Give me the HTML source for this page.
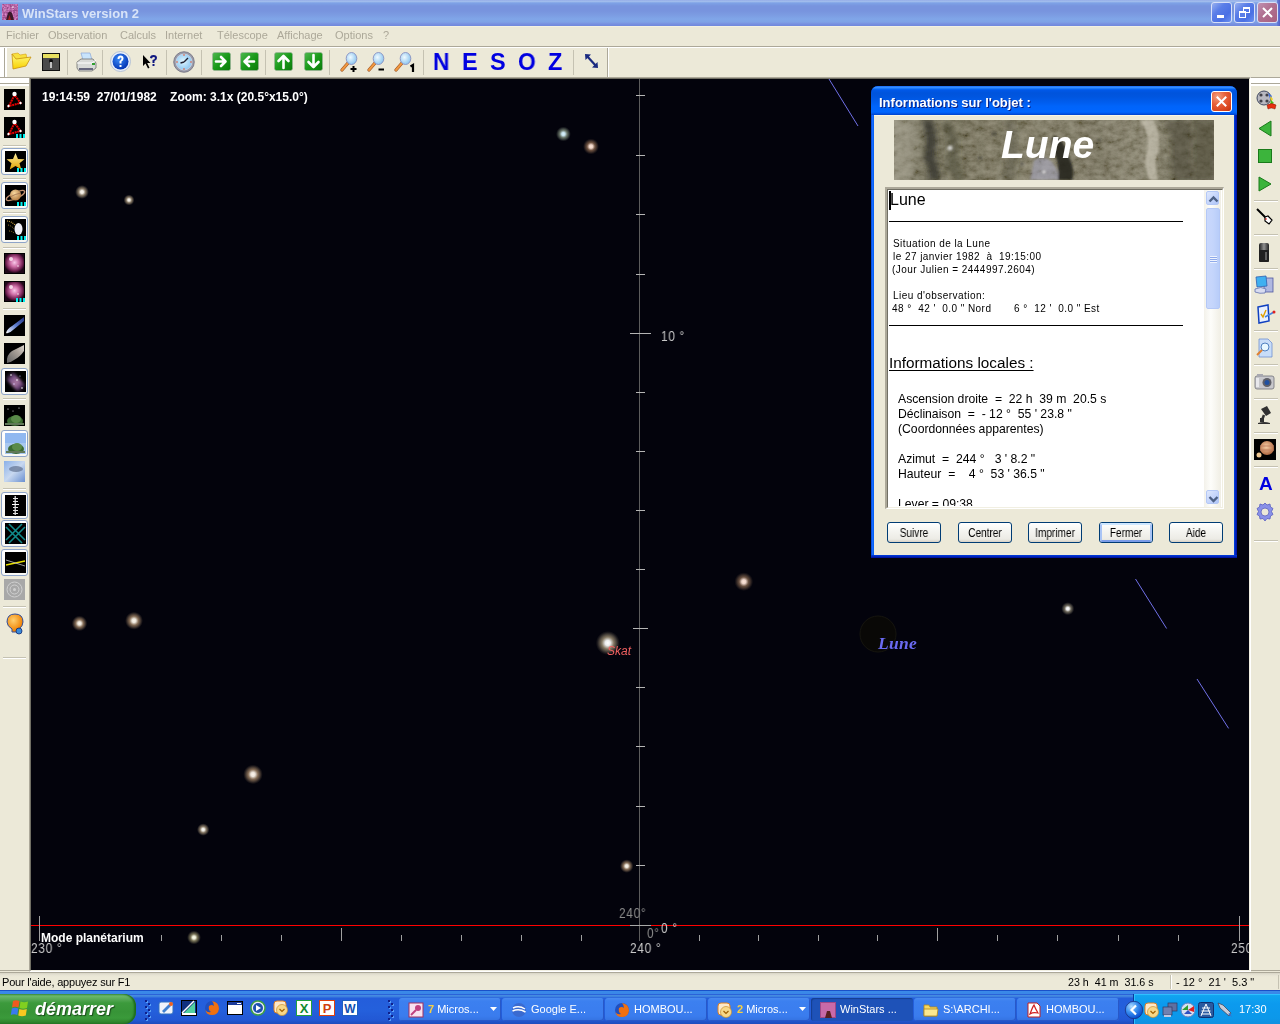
<!DOCTYPE html>
<html><head><meta charset="utf-8">
<style>
*{box-sizing:border-box;margin:0;padding:0}
html,body{width:1280px;height:1024px;overflow:hidden;background:#ece9d8;font-family:"Liberation Sans",sans-serif}
.a{position:absolute}
.t{line-height:1;white-space:pre;will-change:transform}
#sky{left:31px;top:79px;width:1218px;height:891px;background:#03030c;overflow:hidden}

</style></head><body>
<div class="a" style="left:0;top:0;width:1280px;height:26px;background:linear-gradient(#97aee8 0px,#a0bcec 1.5px,#7ea2e6 3px,#7894de 6px,#7894de 11px,#7c9ce2 15px,#80a6e8 19px,#7fa2e6 22px,#7890e0 24px,#7088dc 26px)"></div>
<div class="a" style="left:1277px;top:0;width:3px;height:26px;background:linear-gradient(90deg,#6a82d8,#5060c8)"></div>
<svg class="a" style="left:2px;top:4px;" width="16" height="16" viewBox="0 0 16 16"><defs><filter id="ai" x="0" y="0" width="100%" height="100%"><feTurbulence type="fractalNoise" baseFrequency="0.6" numOctaves="2" seed="3"/><feColorMatrix type="matrix" values="0 0 0 0 0.9  0 0 0 0 0.35  0 0 0 0 0.75  1.6 0 0 0 -0.5"/></filter></defs><rect width="16" height="16" fill="#9a4a8a"/><rect width="16" height="16" filter="url(#ai)"/><path d="M4 16 L6 9 Q8 6 10 9 L12 16Z" fill="#3a1a2a"/><path d="M6 16 L7.5 11 L9 16Z" fill="#a02020"/><circle cx="11" cy="3" r="0.8" fill="#fff"/><circle cx="3" cy="6" r="0.6" fill="#fff"/></svg>
<div class="a t" style="left:22px;top:7.00px;font-size:13px;font-weight:bold;color:#d8e4f8">WinStars version 2</div>
<div class="a" style="left:1211px;top:2px;width:21px;height:21px;border:1px solid #d8e0f8;border-radius:3px;background:linear-gradient(135deg,#98b0f0 0%,#5a7ee8 35%,#4a70e4 70%,#6a90f0 100%)"><svg class="a" style="left:0;top:0" width="19" height="19"><rect x="5" y="12" width="7" height="3" fill="#fff"/></svg></div>
<div class="a" style="left:1234px;top:2px;width:21px;height:21px;border:1px solid #d8e0f8;border-radius:3px;background:linear-gradient(135deg,#98b0f0 0%,#5a7ee8 35%,#4a70e4 70%,#6a90f0 100%)"><svg class="a" style="left:0;top:0" width="19" height="19"><rect x="8.5" y="4.5" width="6" height="5" fill="none" stroke="#fff" stroke-width="1"/><rect x="8" y="4" width="7" height="2" fill="#fff"/><rect x="4.5" y="8.5" width="6" height="6" fill="#5a7ee8" stroke="#fff" stroke-width="1"/><rect x="4" y="8" width="7" height="2" fill="#fff"/></svg></div>
<div class="a" style="left:1257px;top:2px;width:21px;height:21px;border:1px solid #d8e0f8;border-radius:3px;background:linear-gradient(135deg,#c090b0 0%,#b07090 45%,#a86080 100%)"><svg class="a" style="left:0;top:0" width="19" height="19"><path d="M5 5 L14 14 M14 5 L5 14" stroke="#fff" stroke-width="2"/></svg></div>
<div class="a" style="left:0;top:26px;width:1280px;height:1px;background:#f3f1e2"></div>
<div class="a t" style="left:6px;top:29.69px;font-size:11px;color:#aca899">Fichier</div>
<div class="a t" style="left:48px;top:29.69px;font-size:11px;color:#aca899">Observation</div>
<div class="a t" style="left:120px;top:29.69px;font-size:11px;color:#aca899">Calculs</div>
<div class="a t" style="left:165px;top:29.69px;font-size:11px;color:#aca899">Internet</div>
<div class="a t" style="left:217px;top:29.69px;font-size:11px;color:#aca899">Télescope</div>
<div class="a t" style="left:277px;top:29.69px;font-size:11px;color:#aca899">Affichage</div>
<div class="a t" style="left:335px;top:29.69px;font-size:11px;color:#aca899">Options</div>
<div class="a t" style="left:383px;top:29.69px;font-size:11px;color:#aca899">?</div>
<div class="a" style="left:0;top:46px;width:1280px;height:1px;background:#aca899"></div>
<div class="a" style="left:0;top:47px;width:1280px;height:1px;background:#fff"></div>
<div class="a" style="left:0;top:48px;width:4px;height:29px;background:#fff"></div>
<div class="a" style="left:4px;top:48px;width:1px;height:29px;background:#aca899"></div>
<div class="a" style="left:5px;top:48px;width:2px;height:29px;background:#fff"></div>
<div class="a" style="left:0;top:77px;width:1280px;height:1px;background:#aca899"></div>
<div class="a" style="left:607px;top:48px;width:1px;height:29px;background:#aca899"></div>
<div class="a" style="left:608px;top:48px;width:1px;height:29px;background:#fff"></div>
<div class="a" style="left:67px;top:50px;width:1px;height:25px;background:#c5c2b2"></div>
<div class="a" style="left:102px;top:50px;width:1px;height:25px;background:#c5c2b2"></div>
<div class="a" style="left:166px;top:50px;width:1px;height:25px;background:#c5c2b2"></div>
<div class="a" style="left:201px;top:50px;width:1px;height:25px;background:#c5c2b2"></div>
<div class="a" style="left:265px;top:50px;width:1px;height:25px;background:#c5c2b2"></div>
<div class="a" style="left:329px;top:50px;width:1px;height:25px;background:#c5c2b2"></div>
<div class="a" style="left:423px;top:50px;width:1px;height:25px;background:#c5c2b2"></div>
<div class="a" style="left:573px;top:50px;width:1px;height:25px;background:#c5c2b2"></div>
<svg class="a" style="left:11px;top:52px;" width="21" height="18" viewBox="0 0 21 18"><defs><linearGradient id="fo" x1="0" y1="0" x2="0" y2="1"><stop offset="0" stop-color="#fffc80"/><stop offset="1" stop-color="#f8d000"/></linearGradient></defs><path d="M1 2 L7 1 L9 3 L15 2 L16 6 L4 8 Z" fill="#f8e040" stroke="#d8a010" stroke-width="0.6"/><path d="M1 2 L2 17 L15 14 L20 5 L5 7 Z" fill="url(#fo)" stroke="#c89010" stroke-width="0.8"/></svg>
<svg class="a" style="left:42px;top:53px;" width="18" height="18" viewBox="0 0 18 18"><rect x="0" y="0" width="18" height="18" fill="#101010"/><rect x="1" y="1" width="16" height="16" fill="#4a4a4a"/><rect x="1" y="1" width="16" height="4" fill="#e8e060"/><circle cx="9" cy="8" r="2" fill="#0a0a0a"/><rect x="8" y="9" width="2" height="6" fill="#c0c0c0"/></svg>
<svg class="a" style="left:76px;top:52px;" width="21" height="20" viewBox="0 0 21 20"><path d="M5 1 L14 1 L16 8 L7 8 Z" fill="#c8e4fc" stroke="#8aa8d8" stroke-width="0.7"/><path d="M1 10 L5 7 L17 7 L20 11 L20 16 L16 19 L3 19 L1 16 Z" fill="#d8dad8" stroke="#707070" stroke-width="0.8"/><path d="M1 11 L16 11 L20 8" fill="none" stroke="#fff" stroke-width="1"/><rect x="16" y="11" width="3" height="2" fill="#30a030"/><path d="M3 17 L17 17" stroke="#404060" stroke-width="1.5"/></svg>
<svg class="a" style="left:110px;top:51px;" width="21" height="21" viewBox="0 0 21 21"><defs><radialGradient id="hb" cx="0.4" cy="0.35" r="0.7"><stop offset="0" stop-color="#3a8af8"/><stop offset="1" stop-color="#0030b0"/></radialGradient></defs><circle cx="10.5" cy="10.5" r="10" fill="#e8eef8" stroke="#a8b8d0" stroke-width="0.8"/><circle cx="10.5" cy="10.5" r="8" fill="url(#hb)"/><path d="M7.5 8 Q7.5 4.5 10.5 4.5 Q13.5 4.5 13.5 7.5 Q13.5 9.5 11.5 10.5 L11.5 12.5 L9.5 12.5 L9.5 10 Q11.5 9 11.5 7.5 Q11.5 6.5 10.5 6.5 Q9.5 6.5 9.5 8 Z" fill="#fff"/><rect x="9.5" y="14" width="2" height="2" fill="#fff"/></svg>
<svg class="a" style="left:142px;top:54px;" width="17" height="16" viewBox="0 0 17 16"><path d="M1 1 L1 12 L3.5 9.5 L6 14.5 L7.5 13.8 L5.2 9 L8.5 9 Z" fill="#000"/><path d="M8 4 Q8 1 11.5 1 Q15 1 15 4 Q15 6 12.5 7 L12.5 9 L10.5 9 L10.5 6 Q13 5.5 13 4 Q13 3 11.5 3 Q10 3 10 4.5 Z" fill="#101880"/><rect x="10.5" y="10" width="2" height="2" fill="#101880"/></svg>
<svg class="a" style="left:173px;top:51px;" width="22" height="22" viewBox="0 0 22 22"><defs><radialGradient id="cf" cx="0.45" cy="0.45" r="0.6"><stop offset="0" stop-color="#e0f6ff"/><stop offset="1" stop-color="#88c4f0"/></radialGradient></defs><circle cx="11" cy="11" r="10.3" fill="#9a9aa8" stroke="#707080" stroke-width="0.8"/><circle cx="11" cy="11" r="8" fill="url(#cf)" stroke="#d0d8e8" stroke-width="0.7"/><path d="M11 11 L15 7 M11 11 L7.5 12" stroke="#202030" stroke-width="1.4"/><circle cx="11" cy="4" r="0.8" fill="#f05020"/><circle cx="11" cy="18" r="0.8" fill="#f05020"/><circle cx="4" cy="11" r="0.8" fill="#f05020"/><circle cx="18" cy="11" r="0.8" fill="#f05020"/></svg>
<svg class="a" style="left:212px;top:52px;" width="19" height="19" viewBox="0 0 19 19"><defs><linearGradient id="gr" x1="0" y1="0" x2="1" y2="1"><stop offset="0" stop-color="#50b850"/><stop offset="0.5" stop-color="#1a9a1a"/><stop offset="1" stop-color="#0a7a0a"/></linearGradient></defs><rect x="0.5" y="0.5" width="18" height="18" rx="2" fill="url(#gr)" stroke="#a0b0a0" stroke-width="0.6"/><path d="M4 9.5 L13 9.5 M9 5 L13.5 9.5 L9 14" stroke="#fff" stroke-width="2.6" fill="none" stroke-linecap="round" stroke-linejoin="round"/></svg>
<svg class="a" style="left:240px;top:52px;" width="19" height="19" viewBox="0 0 19 19"><defs><linearGradient id="gl" x1="0" y1="0" x2="1" y2="1"><stop offset="0" stop-color="#50b850"/><stop offset="0.5" stop-color="#1a9a1a"/><stop offset="1" stop-color="#0a7a0a"/></linearGradient></defs><rect x="0.5" y="0.5" width="18" height="18" rx="2" fill="url(#gl)" stroke="#a0b0a0" stroke-width="0.6"/><path d="M14 9.5 L5 9.5 M9 5 L4.5 9.5 L9 14" stroke="#fff" stroke-width="2.6" fill="none" stroke-linecap="round" stroke-linejoin="round"/></svg>
<svg class="a" style="left:274px;top:52px;" width="19" height="19" viewBox="0 0 19 19"><defs><linearGradient id="gu" x1="0" y1="0" x2="1" y2="1"><stop offset="0" stop-color="#50b850"/><stop offset="0.5" stop-color="#1a9a1a"/><stop offset="1" stop-color="#0a7a0a"/></linearGradient></defs><rect x="0.5" y="0.5" width="18" height="18" rx="2" fill="url(#gu)" stroke="#a0b0a0" stroke-width="0.6"/><path d="M9.5 16 L9.5 4 M4.5 9 L9.5 4 L14.5 9" stroke="#fff" stroke-width="2.6" fill="none" stroke-linecap="round" stroke-linejoin="round"/></svg>
<svg class="a" style="left:304px;top:52px;" width="19" height="19" viewBox="0 0 19 19"><defs><linearGradient id="gd" x1="0" y1="0" x2="1" y2="1"><stop offset="0" stop-color="#50b850"/><stop offset="0.5" stop-color="#1a9a1a"/><stop offset="1" stop-color="#0a7a0a"/></linearGradient></defs><rect x="0.5" y="0.5" width="18" height="18" rx="2" fill="url(#gd)" stroke="#a0b0a0" stroke-width="0.6"/><path d="M9.5 3 L9.5 15 M4.5 10 L9.5 15 L14.5 10" stroke="#fff" stroke-width="2.6" fill="none" stroke-linecap="round" stroke-linejoin="round"/></svg>
<svg class="a" style="left:340px;top:51px;" width="21" height="22" viewBox="0 0 21 22"><defs><radialGradient id="zl" cx="0.4" cy="0.4" r="0.6"><stop offset="0" stop-color="#f0faff"/><stop offset="1" stop-color="#90c8f0"/></radialGradient></defs><path d="M2 19 L8 12" stroke="#9a5020" stroke-width="3.2" stroke-linecap="round"/><path d="M2 19 L8 12" stroke="#f09840" stroke-width="2" stroke-linecap="round"/><ellipse cx="11.5" cy="7.5" rx="5.3" ry="6" fill="url(#zl)" stroke="#8890c0" stroke-width="0.9"/><path d="M10.5 18 L16.5 18 M13.5 15 L13.5 21" stroke="#000" stroke-width="2"/></svg>
<svg class="a" style="left:367px;top:51px;" width="21" height="22" viewBox="0 0 21 22"><defs><radialGradient id="zl" cx="0.4" cy="0.4" r="0.6"><stop offset="0" stop-color="#f0faff"/><stop offset="1" stop-color="#90c8f0"/></radialGradient></defs><path d="M2 19 L8 12" stroke="#9a5020" stroke-width="3.2" stroke-linecap="round"/><path d="M2 19 L8 12" stroke="#f09840" stroke-width="2" stroke-linecap="round"/><ellipse cx="11.5" cy="7.5" rx="5.3" ry="6" fill="url(#zl)" stroke="#8890c0" stroke-width="0.9"/><path d="M11.5 18.5 L17 18.5" stroke="#000" stroke-width="2"/></svg>
<svg class="a" style="left:394px;top:51px;" width="21" height="22" viewBox="0 0 21 22"><defs><radialGradient id="zl" cx="0.4" cy="0.4" r="0.6"><stop offset="0" stop-color="#f0faff"/><stop offset="1" stop-color="#90c8f0"/></radialGradient></defs><path d="M2 19 L8 12" stroke="#9a5020" stroke-width="3.2" stroke-linecap="round"/><path d="M2 19 L8 12" stroke="#f09840" stroke-width="2" stroke-linecap="round"/><ellipse cx="11.5" cy="7.5" rx="5.3" ry="6" fill="url(#zl)" stroke="#8890c0" stroke-width="0.9"/><path d="M16.5 15.5 L19 14 L19 21" stroke="#000" stroke-width="2.2" fill="none"/></svg>
<div class="a t" style="left:432.5px;top:50.91px;font-size:23.5px;font-weight:bold;color:#0000e0;transform:scaleX(0.97);transform-origin:0 0">N</div>
<div class="a t" style="left:461.5px;top:50.91px;font-size:23.5px;font-weight:bold;color:#0000e0;transform:scaleX(0.97);transform-origin:0 0">E</div>
<div class="a t" style="left:489.5px;top:50.91px;font-size:23.5px;font-weight:bold;color:#0000e0;transform:scaleX(0.97);transform-origin:0 0">S</div>
<div class="a t" style="left:517.5px;top:50.91px;font-size:23.5px;font-weight:bold;color:#0000e0;transform:scaleX(0.97);transform-origin:0 0">O</div>
<div class="a t" style="left:547.5px;top:50.91px;font-size:23.5px;font-weight:bold;color:#0000e0;transform:scaleX(0.97);transform-origin:0 0">Z</div>
<svg class="a" style="left:584px;top:53px;" width="15" height="17" viewBox="0 0 15 17"><path d="M2.5 2.5 L12.5 13.5" stroke="#1a2a80" stroke-width="2.2"/><path d="M1 1 L7 1.5 L1.5 7 Z M14 15 L8 14.5 L13.5 9 Z" fill="#1a2a80"/></svg>
<div class="a" style="left:0;top:78px;width:29px;height:5px;background:#fff"></div>
<div class="a" style="left:0;top:83px;width:29px;height:1px;background:#aca899"></div>
<div class="a" style="left:0;top:84px;width:29px;height:2px;background:#fff"></div>
<div class="a" style="left:0;top:970px;width:29px;height:1px;background:#aca899"></div>
<div class="a" style="left:1251px;top:78px;width:29px;height:5px;background:#fff"></div>
<div class="a" style="left:1251px;top:83px;width:29px;height:1px;background:#aca899"></div>
<div class="a" style="left:1251px;top:84px;width:29px;height:2px;background:#fff"></div>
<div class="a" style="left:1251px;top:970px;width:29px;height:1px;background:#aca899"></div>
<div class="a" style="left:29px;top:77px;width:1222px;height:895px;border-top:1px solid #aca899;border-left:1px solid #aca899;border-right:1px solid #fff;border-bottom:1px solid #fff"><div class="a" style="left:0;top:0;width:1220px;height:893px;border-top:1px solid #716f64;border-left:1px solid #716f64;border-right:1px solid #f1efe2;border-bottom:1px solid #f1efe2"></div></div>
<svg class="a" style="left:4px;top:89px;" width="21" height="21" viewBox="0 0 21 21"><rect width="21" height="21" fill="#000"/><path d="M10.5 6 L5 17 L16.5 14 Z" fill="none" stroke="#e00000" stroke-width="2" stroke-dasharray="2 0.6"/><circle cx="10.5" cy="5" r="2.2" fill="#fff"/><path d="M4.5 15.5 L6 17 L4.5 18.5 L3 17Z" fill="#fff"/><path d="M16.5 12.5 L18 14 L16.5 15.5 L15 14Z" fill="#fff"/></svg>
<svg class="a" style="left:4px;top:117px;" width="21" height="21" viewBox="0 0 21 21"><rect width="21" height="21" fill="#000"/><path d="M10.5 6 L5 17 L16.5 14 Z" fill="none" stroke="#e00000" stroke-width="2" stroke-dasharray="2 0.6"/><circle cx="10.5" cy="5" r="2.2" fill="#fff"/><path d="M4.5 15.5 L6 17 L4.5 18.5 L3 17Z" fill="#fff"/><path d="M16.5 12.5 L18 14 L16.5 15.5 L15 14Z" fill="#fff"/><rect x="12" y="17" width="2" height="4" fill="#00f0f0"/><rect x="15.5" y="17" width="2" height="4" fill="#00f0f0"/><rect x="19" y="17" width="2" height="4" fill="#00f0f0"/></svg>
<div class="a" style="left:3px;top:145px;width:23px;height:1px;background:#c5c2b2"></div><div class="a" style="left:3px;top:146px;width:23px;height:1px;background:#fff"></div>
<div class="a" style="left:1px;top:148px;width:27px;height:27px;border:1px solid #8ea4c8;border-radius:3px;background:linear-gradient(#fff,#f8f8f4)"></div>
<svg class="a" style="left:5px;top:151px;" width="21" height="21" viewBox="0 0 21 21"><rect width="21" height="21" fill="#000"/><defs><linearGradient id="st" x1="0" y1="0" x2="0" y2="1"><stop offset="0" stop-color="#fff0a0"/><stop offset="1" stop-color="#e0a000"/></linearGradient></defs><path d="M10.5 2 L13 8 L19.5 8.3 L14.5 12.3 L16.3 18.5 L10.5 15 L4.7 18.5 L6.5 12.3 L1.5 8.3 L8 8 Z" fill="url(#st)"/><rect x="12" y="17" width="2" height="4" fill="#00f0f0"/><rect x="15.5" y="17" width="2" height="4" fill="#00f0f0"/><rect x="19" y="17" width="2" height="4" fill="#00f0f0"/></svg>
<div class="a" style="left:3px;top:178px;width:23px;height:1px;background:#c5c2b2"></div><div class="a" style="left:3px;top:179px;width:23px;height:1px;background:#fff"></div>
<div class="a" style="left:1px;top:182px;width:27px;height:27px;border:1px solid #8ea4c8;border-radius:3px;background:linear-gradient(#fff,#f8f8f4)"></div>
<svg class="a" style="left:5px;top:185px;" width="21" height="21" viewBox="0 0 21 21"><rect width="21" height="21" fill="#000"/><defs><radialGradient id="sa" cx="0.4" cy="0.35" r="0.7"><stop offset="0" stop-color="#f8d8a0"/><stop offset="1" stop-color="#b07840"/></radialGradient></defs><ellipse cx="10.5" cy="10.5" rx="10" ry="3" transform="rotate(-25 10.5 10.5)" fill="none" stroke="#c09070" stroke-width="1.3"/><circle cx="10.5" cy="10" r="5.5" fill="url(#sa)"/><path d="M5 12 Q10 9 16 8" stroke="#a07050" stroke-width="0.8" fill="none"/><rect x="12" y="17" width="2" height="4" fill="#00f0f0"/><rect x="15.5" y="17" width="2" height="4" fill="#00f0f0"/><rect x="19" y="17" width="2" height="4" fill="#00f0f0"/></svg>
<div class="a" style="left:3px;top:212px;width:23px;height:1px;background:#c5c2b2"></div><div class="a" style="left:3px;top:213px;width:23px;height:1px;background:#fff"></div>
<div class="a" style="left:1px;top:216px;width:27px;height:27px;border:1px solid #8ea4c8;border-radius:3px;background:linear-gradient(#fff,#f8f8f4)"></div>
<svg class="a" style="left:5px;top:219px;" width="21" height="21" viewBox="0 0 21 21"><rect width="21" height="21" fill="#000"/><ellipse cx="13.5" cy="10" rx="4" ry="6" fill="#f0f0f8"/><path d="M2 2 Q6 2 10 6" stroke="#c8a040" stroke-width="1.2" fill="none" stroke-dasharray="1 1"/><path d="M3 6 Q7 7 9 10 M4 12 Q7 12 9 14" stroke="#a08030" stroke-width="1" fill="none" stroke-dasharray="1 1.2"/><rect x="12" y="17" width="2" height="4" fill="#00f0f0"/><rect x="15.5" y="17" width="2" height="4" fill="#00f0f0"/><rect x="19" y="17" width="2" height="4" fill="#00f0f0"/></svg>
<div class="a" style="left:3px;top:247px;width:23px;height:1px;background:#c5c2b2"></div><div class="a" style="left:3px;top:248px;width:23px;height:1px;background:#fff"></div>
<svg class="a" style="left:4px;top:253px;" width="21" height="21" viewBox="0 0 21 21"><rect width="21" height="21" fill="#000"/><defs><radialGradient id="nb" cx="0.5" cy="0.45" r="0.55"><stop offset="0" stop-color="#f8c8e8"/><stop offset="0.4" stop-color="#d070a8"/><stop offset="0.8" stop-color="#702050"/><stop offset="1" stop-color="#200818"/></radialGradient></defs><rect x="1" y="1" width="19" height="19" fill="url(#nb)"/><circle cx="7" cy="6" r="2" fill="#fff0f8" opacity="0.8"/><circle cx="14" cy="13" r="0.7" fill="#fff"/></svg>
<svg class="a" style="left:4px;top:281px;" width="21" height="21" viewBox="0 0 21 21"><rect width="21" height="21" fill="#000"/><defs><radialGradient id="nb" cx="0.5" cy="0.45" r="0.55"><stop offset="0" stop-color="#f8c8e8"/><stop offset="0.4" stop-color="#d070a8"/><stop offset="0.8" stop-color="#702050"/><stop offset="1" stop-color="#200818"/></radialGradient></defs><rect x="1" y="1" width="19" height="19" fill="url(#nb)"/><circle cx="7" cy="6" r="2" fill="#fff0f8" opacity="0.8"/><circle cx="14" cy="13" r="0.7" fill="#fff"/><rect x="12" y="17" width="2" height="4" fill="#00f0f0"/><rect x="15.5" y="17" width="2" height="4" fill="#00f0f0"/><rect x="19" y="17" width="2" height="4" fill="#00f0f0"/></svg>
<div class="a" style="left:3px;top:308px;width:23px;height:1px;background:#c5c2b2"></div><div class="a" style="left:3px;top:309px;width:23px;height:1px;background:#fff"></div>
<svg class="a" style="left:4px;top:315px;" width="21" height="21" viewBox="0 0 21 21"><rect width="21" height="21" fill="#000"/><defs><linearGradient id="cm" x1="0" y1="1" x2="1" y2="0"><stop offset="0" stop-color="#ffffff"/><stop offset="0.5" stop-color="#6080d0"/><stop offset="1" stop-color="#203080"/></linearGradient></defs><path d="M2 18 Q3 14 8 11 L20 2 L20 6 L9 15 Q5 19 2 18Z" fill="url(#cm)"/></svg>
<svg class="a" style="left:4px;top:343px;" width="21" height="21" viewBox="0 0 21 21"><rect width="21" height="21" fill="#000"/><defs><linearGradient id="as" x1="0" y1="1" x2="1" y2="0"><stop offset="0" stop-color="#606060"/><stop offset="0.6" stop-color="#a8a098"/><stop offset="1" stop-color="#e0d8d0"/></linearGradient></defs><path d="M3 20 Q2 12 8 8 L20 2 L20 8 Q16 14 10 17 Q6 20 3 20Z" fill="url(#as)"/></svg>
<div class="a" style="left:1px;top:368px;width:27px;height:27px;border:1px solid #8ea4c8;border-radius:3px;background:linear-gradient(#fff,#f8f8f4)"></div>
<svg class="a" style="left:5px;top:371px;" width="21" height="21" viewBox="0 0 21 21"><rect width="21" height="21" fill="#000"/><defs><linearGradient id="gx" x1="0" y1="0" x2="1" y2="1"><stop offset="0" stop-color="#000" stop-opacity="0"/><stop offset="0.3" stop-color="#8a5a9a"/><stop offset="0.55" stop-color="#c890c0"/><stop offset="0.75" stop-color="#7a4a8a"/><stop offset="1" stop-color="#000" stop-opacity="0"/></linearGradient></defs><filter id="gxb"><feGaussianBlur stdDeviation="1.5"/></filter><path d="M2 2 L8 1 L20 14 L19 20 L12 20 L1 8Z" fill="url(#gx)" filter="url(#gxb)" opacity="0.85"/><circle cx="6" cy="4" r="0.8" fill="#fff"/><circle cx="12" cy="9" r="0.8" fill="#fff"/><circle cx="17" cy="17" r="0.8" fill="#fff"/><circle cx="9" cy="13" r="0.7" fill="#e0d0ff"/><circle cx="15" cy="5" r="0.6" fill="#c0c0ff"/></svg>
<div class="a" style="left:3px;top:398px;width:23px;height:1px;background:#c5c2b2"></div><div class="a" style="left:3px;top:399px;width:23px;height:1px;background:#fff"></div>
<svg class="a" style="left:4px;top:405px;" width="21" height="21" viewBox="0 0 21 21"><rect width="21" height="21" fill="#000"/><circle cx="4" cy="4" r="0.6" fill="#fff"/><circle cx="15" cy="3" r="0.6" fill="#fff"/><circle cx="9" cy="6" r="0.5" fill="#fff"/><ellipse cx="11" cy="16" rx="8" ry="5" fill="#3a6a30"/><ellipse cx="12" cy="14" rx="5" ry="4" fill="#5a8a48"/><rect x="1" y="18" width="19" height="2" fill="#607858"/></svg>
<div class="a" style="left:1px;top:430px;width:27px;height:27px;border:1px solid #8ea4c8;border-radius:3px;background:linear-gradient(#fff,#f8f8f4)"></div>
<svg class="a" style="left:5px;top:433px;" width="21" height="21" viewBox="0 0 21 21"><rect width="21" height="21" fill="#a8c8f0"/><rect y="0" width="21" height="10" fill="#90b8f0"/><ellipse cx="11" cy="16" rx="8" ry="5" fill="#3a6a30"/><ellipse cx="12" cy="14" rx="5" ry="4" fill="#5a8a48"/><rect x="1" y="18" width="19" height="2" fill="#607858"/></svg>
<svg class="a" style="left:4px;top:461px;" width="21" height="21" viewBox="0 0 21 21"><defs><linearGradient id="cl" x1="0" y1="0" x2="1" y2="1"><stop offset="0" stop-color="#8ab0e8"/><stop offset="0.5" stop-color="#c8d8f0"/><stop offset="1" stop-color="#6a90d0"/></linearGradient></defs><rect width="21" height="21" fill="url(#cl)"/><ellipse cx="12" cy="8" rx="7" ry="3" fill="#506080" opacity="0.6"/></svg>
<div class="a" style="left:3px;top:488px;width:23px;height:1px;background:#c5c2b2"></div><div class="a" style="left:3px;top:489px;width:23px;height:1px;background:#fff"></div>
<div class="a" style="left:1px;top:492px;width:27px;height:27px;border:1px solid #8ea4c8;border-radius:3px;background:linear-gradient(#fff,#f8f8f4)"></div>
<svg class="a" style="left:5px;top:495px;" width="21" height="21" viewBox="0 0 21 21"><rect width="21" height="21" fill="#000"/><rect x="9.5" y="1" width="1.5" height="19" fill="#c0c0c0"/><rect x="8" y="3" width="5" height="1" fill="#e0e0e0"/><rect x="8" y="6" width="5" height="1" fill="#e0e0e0"/><rect x="7" y="9" width="7" height="1" fill="#fff"/><rect x="8" y="12" width="5" height="1" fill="#e0e0e0"/><rect x="8" y="15" width="5" height="1" fill="#e0e0e0"/><rect x="8" y="18" width="5" height="1" fill="#e0e0e0"/></svg>
<div class="a" style="left:1px;top:520px;width:27px;height:27px;border:1px solid #8ea4c8;border-radius:3px;background:linear-gradient(#fff,#f8f8f4)"></div>
<svg class="a" style="left:5px;top:523px;" width="21" height="21" viewBox="0 0 21 21"><rect width="21" height="21" fill="#000"/><path d="M1 4 L17 20 M4 1 L20 17 M17 1 L1 17 M20 4 L4 20" stroke="#108a8a" stroke-width="1.6"/></svg>
<div class="a" style="left:1px;top:549px;width:27px;height:27px;border:1px solid #8ea4c8;border-radius:3px;background:linear-gradient(#fff,#f8f8f4)"></div>
<svg class="a" style="left:5px;top:552px;" width="21" height="21" viewBox="0 0 21 21"><rect width="21" height="21" fill="#000"/><path d="M1 13 L20 9" stroke="#e8e000" stroke-width="1.5"/><path d="M1 8 L20 14" stroke="#c0c0c0" stroke-width="0.8"/></svg>
<svg class="a" style="left:4px;top:579px;" width="21" height="21" viewBox="0 0 21 21"><rect width="21" height="21" fill="#a8a8a8"/><circle cx="10.5" cy="10.5" r="7.5" fill="none" stroke="#d0d0d0" stroke-width="1"/><circle cx="10.5" cy="10.5" r="4.5" fill="none" stroke="#d0d0d0" stroke-width="1"/><circle cx="10.5" cy="10.5" r="1.5" fill="#d0d0d0"/></svg>
<div class="a" style="left:3px;top:606px;width:23px;height:1px;background:#c5c2b2"></div><div class="a" style="left:3px;top:607px;width:23px;height:1px;background:#fff"></div>
<svg class="a" style="left:4px;top:613px;" width="22" height="23" viewBox="0 0 22 23"><defs><radialGradient id="bu" cx="0.4" cy="0.35" r="0.6"><stop offset="0" stop-color="#ffd070"/><stop offset="1" stop-color="#f08000"/></radialGradient></defs><path d="M11 1 Q19 1 19 9 Q19 13 15 16 L15 19 L8 19 L8 16 Q3 13 3 9 Q3 1 11 1Z" fill="url(#bu)" stroke="#3050a0" stroke-width="1"/><circle cx="15" cy="18" r="3" fill="#3a8ad8" stroke="#102870" stroke-width="0.8"/></svg>
<div class="a" style="left:3px;top:657px;width:23px;height:1px;background:#c5c2b2"></div><div class="a" style="left:3px;top:658px;width:23px;height:1px;background:#fff"></div>
<svg class="a" style="left:1256px;top:90px;" width="21" height="21" viewBox="0 0 21 21"><circle cx="8" cy="8" r="7" fill="#b8b8c0" stroke="#404860" stroke-width="1"/><circle cx="5" cy="5" r="1.6" fill="#404048"/><circle cx="11" cy="5" r="1.6" fill="#404048"/><circle cx="5" cy="11" r="1.6" fill="#404048"/><circle cx="11" cy="11" r="1.6" fill="#404048"/><path d="M12 3 L16 6 L14 9Z" fill="#4070e0"/><path d="M14 6 L17 9 L15 12Z" fill="#f0d020"/><path d="M15 10 L18 13 L14 15Z" fill="#40c020"/><path d="M11 15 Q16 12 20 15 L19 19 Q15 17 12 19Z" fill="#e83010" stroke="#801000" stroke-width="0.5"/></svg>
<svg class="a" style="left:1258px;top:120px;" width="14" height="17" viewBox="0 0 14 17"><path d="M13 1 L13 16 L1 8.5Z" fill="#3cb43c" stroke="#1a7a1a" stroke-width="1"/></svg>
<svg class="a" style="left:1258px;top:149px;" width="14" height="14" viewBox="0 0 14 14"><rect x="0.5" y="0.5" width="13" height="13" fill="#3cb43c" stroke="#1a7a1a" stroke-width="1"/></svg>
<svg class="a" style="left:1258px;top:176px;" width="14" height="16" viewBox="0 0 14 16"><path d="M1 1 L1 15 L13 8Z" fill="#3cb43c" stroke="#1a7a1a" stroke-width="1"/></svg>
<div class="a" style="left:1254px;top:200px;width:24px;height:1px;background:#c5c2b2"></div><div class="a" style="left:1254px;top:201px;width:24px;height:1px;background:#fff"></div>
<svg class="a" style="left:1256px;top:208px;" width="17" height="17" viewBox="0 0 17 17"><path d="M1 1 L10 10" stroke="#000" stroke-width="2"/><path d="M9 9 L12 8 L16 12 L13 16 L9 13 Z" fill="#fff" stroke="#000" stroke-width="1.2"/><circle cx="10" cy="11" r="0.8" fill="#e00"/></svg>
<div class="a" style="left:1254px;top:234px;width:24px;height:1px;background:#c5c2b2"></div><div class="a" style="left:1254px;top:235px;width:24px;height:1px;background:#fff"></div>
<svg class="a" style="left:1258px;top:242px;" width="12" height="21" viewBox="0 0 12 21"><defs><linearGradient id="bt" x1="0" y1="0" x2="1" y2="0"><stop offset="0" stop-color="#202020"/><stop offset="0.5" stop-color="#909090"/><stop offset="1" stop-color="#202020"/></linearGradient></defs><rect x="1" y="1" width="10" height="19" rx="2" fill="url(#bt)"/><rect x="1" y="8" width="10" height="12" rx="1" fill="#202020"/><rect x="7" y="10" width="2" height="8" fill="#606060"/></svg>
<div class="a" style="left:1254px;top:268px;width:24px;height:1px;background:#c5c2b2"></div><div class="a" style="left:1254px;top:269px;width:24px;height:1px;background:#fff"></div>
<svg class="a" style="left:1254px;top:275px;" width="20" height="20" viewBox="0 0 20 20"><rect x="10" y="3" width="9" height="14" fill="#b0b8e0" stroke="#5058a0" stroke-width="0.8"/><path d="M2 2 L12 1 L13 11 L3 12Z" fill="#40b0f0" stroke="#3060b0" stroke-width="0.8"/><path d="M1 14 Q7 11 12 14 L11 18 Q6 19 1 17Z" fill="#d8dcf0" stroke="#6070b0" stroke-width="0.8"/></svg>
<svg class="a" style="left:1256px;top:304px;" width="20" height="20" viewBox="0 0 20 20"><path d="M2 3 L12 1 L13 17 L3 19Z" fill="#e8f0ff" stroke="#1040c0" stroke-width="1.5"/><path d="M5 10 L7 13 L10 6" stroke="#e0a000" stroke-width="1.4" fill="none"/><path d="M9 13 L18 8" stroke="#4080e0" stroke-width="1.6"/><circle cx="18" cy="8" r="1.5" fill="#e02020"/></svg>
<div class="a" style="left:1254px;top:330px;width:24px;height:1px;background:#c5c2b2"></div><div class="a" style="left:1254px;top:331px;width:24px;height:1px;background:#fff"></div>
<svg class="a" style="left:1255px;top:338px;" width="18" height="20" viewBox="0 0 18 20"><path d="M4 1 L13 1 L17 5 L17 19 L4 19Z" fill="#c8ddf8" stroke="#7090d0" stroke-width="0.8"/><circle cx="10" cy="9" r="4" fill="#e8f8ff" stroke="#5080c0" stroke-width="1"/><path d="M7 12 L2 17" stroke="#e08030" stroke-width="2"/></svg>
<div class="a" style="left:1254px;top:364px;width:24px;height:1px;background:#c5c2b2"></div><div class="a" style="left:1254px;top:365px;width:24px;height:1px;background:#fff"></div>
<svg class="a" style="left:1254px;top:373px;" width="21" height="18" viewBox="0 0 21 18"><rect x="1" y="3" width="19" height="13" rx="2" fill="#c8c8cc" stroke="#707078" stroke-width="0.8"/><rect x="3" y="1" width="6" height="3" fill="#a8a8b0"/><circle cx="13" cy="9.5" r="4.5" fill="#606068"/><circle cx="13" cy="9.5" r="2.5" fill="#2050a0"/><rect x="2" y="5" width="3" height="9" fill="#e8e8ec"/></svg>
<div class="a" style="left:1254px;top:398px;width:24px;height:1px;background:#c5c2b2"></div><div class="a" style="left:1254px;top:399px;width:24px;height:1px;background:#fff"></div>
<svg class="a" style="left:1257px;top:405px;" width="16" height="20" viewBox="0 0 16 20"><path d="M4 4 L10 1 L14 8 L9 11Z" fill="#303030"/><path d="M7 10 L5 15" stroke="#303030" stroke-width="2.5"/><rect x="3" y="13" width="4" height="4" fill="#303030"/><path d="M1 18 Q7 16 13 18 L13 19 L1 19Z" fill="#303030"/></svg>
<div class="a" style="left:1254px;top:432px;width:24px;height:1px;background:#c5c2b2"></div><div class="a" style="left:1254px;top:433px;width:24px;height:1px;background:#fff"></div>
<svg class="a" style="left:1254px;top:439px;" width="22" height="21" viewBox="0 0 22 21"><rect width="22" height="21" fill="#000"/><defs><radialGradient id="ju" cx="0.45" cy="0.4" r="0.6"><stop offset="0" stop-color="#f8d0a8"/><stop offset="1" stop-color="#b06840"/></radialGradient></defs><circle cx="13" cy="9" r="7" fill="url(#ju)"/><path d="M6 7 L20 7 M6 11 L20 11" stroke="#c08060" stroke-width="1"/><circle cx="5" cy="16" r="2.5" fill="#f0c890"/></svg>
<div class="a" style="left:1254px;top:466px;width:24px;height:1px;background:#c5c2b2"></div><div class="a" style="left:1254px;top:467px;width:24px;height:1px;background:#fff"></div>
<div class="a t" style="left:1258.5px;top:474.12px;font-size:19px;font-weight:bold;color:#0000e0">A</div>
<svg class="a" style="left:1256px;top:502px;" width="18" height="20" viewBox="0 0 18 20"><path d="M9 1 L11 3 L14 2 L14.5 5 L17 6.5 L15.5 9.5 L17 12.5 L14.5 14 L14 17 L11 16.5 L9 19 L7 16.5 L4 17 L3.5 14 L1 12.5 L2.5 9.5 L1 6.5 L3.5 5 L4 2 L7 3Z" fill="#8890e8" stroke="#5a60c0" stroke-width="0.8"/><circle cx="9" cy="10" r="4" fill="#ece9d8" stroke="#5a60c0" stroke-width="0.8"/></svg>
<div class="a" style="left:1254px;top:540px;width:24px;height:1px;background:#c5c2b2"></div><div class="a" style="left:1254px;top:541px;width:24px;height:1px;background:#fff"></div>
<div class="a" style="left:0;top:972px;width:1280px;height:1px;background:#aca899"></div>
<div class="a" style="left:0;top:973px;width:1280px;height:17px;background:linear-gradient(#d8d5c6 0px,#e6e3d4 2px,#ece9d8 4px,#ece9d8 100%)"></div>
<div class="a t" style="left:2px;top:977.19px;font-size:11px;color:#000;letter-spacing:-0.2px">Pour l'aide, appuyez sur F1</div>
<div class="a t" style="left:1067.7px;top:977.44px;font-size:10.7px;color:#000">23 h  41 m  31.6 s</div>
<div class="a" style="left:1170px;top:975px;width:1px;height:14px;background:#c5c2b2"></div><div class="a" style="left:1171px;top:975px;width:1px;height:14px;background:#fff"></div>
<div class="a t" style="left:1176px;top:977.19px;font-size:11px;color:#000">- 12 °  21 '  5.3 "</div>
<div class="a" style="left:1278px;top:975px;width:1px;height:14px;background:#c5c2b2"></div>
<div class="a" style="left:0;top:990px;width:1280px;height:34px;background:linear-gradient(#1a50c8 0px,#1a50c8 1px,#3a8ae8 1px,#3a86e8 4px,#2a62d8 4px,#2a62d8 5px,#4890e0 5px,#3a7ce0 7px,#245edb 8px,#2460dc 20px,#2258d4 30px,#1e4cbc 34px)"></div>
<div class="a" style="left:0;top:994px;width:136px;height:30px;border-radius:0 12px 12px 0;background:linear-gradient(#4a9a4a 0px,#6cb86c 2px,#58aa58 5px,#3c9a3c 9px,#379437 18px,#3a9a3a 24px,#2f862f 28px,#2a7a2a 30px);box-shadow:inset -2px 0 2px #1c6a1c"></div>
<svg class="a" style="left:10px;top:999px;" width="20" height="19" viewBox="0 0 20 19"><path d="M3 2 Q6 0.5 9.5 2 L8.5 8.5 Q5 7 2 8.5Z" fill="#f05a20"/><path d="M10.5 2.5 Q14 4 18 2.5 L17 9 Q13 10.5 9.5 9Z" fill="#80d020"/><path d="M1.8 9.5 Q5 8 8.3 9.5 L7.3 16 Q4 14.5 0.8 16Z" fill="#3a7af0"/><path d="M9.3 10 Q13 11.5 16.8 10 L15.8 16.5 Q12 18 8.3 16.5Z" fill="#f8c820"/></svg>
<div class="a t" style="left:34.5px;top:999.56px;font-size:18px;font-weight:bold;font-style:italic;color:#fff;text-shadow:1px 1px 1px #1a4a1a">démarrer</div>
<div class="a" style="left:145px;top:1000px;width:2px;height:2px;background:#10208a;box-shadow:1px 1px 0 #5aa0f8"></div><div class="a" style="left:148px;top:1003px;width:2px;height:2px;background:#10208a;box-shadow:1px 1px 0 #5aa0f8"></div><div class="a" style="left:145px;top:1006px;width:2px;height:2px;background:#10208a;box-shadow:1px 1px 0 #5aa0f8"></div><div class="a" style="left:148px;top:1009px;width:2px;height:2px;background:#10208a;box-shadow:1px 1px 0 #5aa0f8"></div><div class="a" style="left:145px;top:1012px;width:2px;height:2px;background:#10208a;box-shadow:1px 1px 0 #5aa0f8"></div><div class="a" style="left:148px;top:1015px;width:2px;height:2px;background:#10208a;box-shadow:1px 1px 0 #5aa0f8"></div><div class="a" style="left:145px;top:1018px;width:2px;height:2px;background:#10208a;box-shadow:1px 1px 0 #5aa0f8"></div>
<div class="a" style="left:388px;top:1000px;width:2px;height:2px;background:#10208a;box-shadow:1px 1px 0 #5aa0f8"></div><div class="a" style="left:391px;top:1003px;width:2px;height:2px;background:#10208a;box-shadow:1px 1px 0 #5aa0f8"></div><div class="a" style="left:388px;top:1006px;width:2px;height:2px;background:#10208a;box-shadow:1px 1px 0 #5aa0f8"></div><div class="a" style="left:391px;top:1009px;width:2px;height:2px;background:#10208a;box-shadow:1px 1px 0 #5aa0f8"></div><div class="a" style="left:388px;top:1012px;width:2px;height:2px;background:#10208a;box-shadow:1px 1px 0 #5aa0f8"></div><div class="a" style="left:391px;top:1015px;width:2px;height:2px;background:#10208a;box-shadow:1px 1px 0 #5aa0f8"></div><div class="a" style="left:388px;top:1018px;width:2px;height:2px;background:#10208a;box-shadow:1px 1px 0 #5aa0f8"></div>
<svg class="a" style="left:158px;top:1000px;" width="16" height="16" viewBox="0 0 16 16"><rect x="1" y="2" width="14" height="12" rx="2" fill="#f0f4fc" stroke="#3070c0"/><path d="M4 11 L11 4 L13 6 L6 13Z" fill="#4080d0"/><circle cx="13" cy="4" r="2" fill="#f06020"/></svg>
<svg class="a" style="left:181px;top:1000px;" width="16" height="16" viewBox="0 0 16 16"><rect x="0.5" y="0.5" width="15" height="15" fill="#103080" stroke="#000"/><path d="M2 14 L14 2 L14 14Z" fill="#50d0a0"/><path d="M1 13 L13 1" stroke="#fff" stroke-width="1.5"/><rect x="1" y="13" width="14" height="2" fill="#fff"/></svg>
<svg class="a" style="left:204px;top:1000px;" width="16" height="16" viewBox="0 0 16 16"><circle cx="8" cy="8" r="7" fill="#2050c0"/><path d="M8 1 Q15 2 15 9 Q14 15 8 15 Q2 15 1.5 10 Q3 13 7 12 Q4 10 5 6 Q8 4 10 6 Q10 3 8 1Z" fill="#f07010"/></svg>
<svg class="a" style="left:227px;top:1000px;" width="16" height="16" viewBox="0 0 16 16"><rect x="0.5" y="1.5" width="15" height="13" fill="#fff" stroke="#000"/><rect x="1" y="2" width="14" height="3" fill="#1a3a9a"/><rect x="10" y="3" width="4" height="1" fill="#fff"/></svg>
<svg class="a" style="left:250px;top:1000px;" width="16" height="16" viewBox="0 0 16 16"><circle cx="8" cy="8" r="7" fill="#e8eef8" stroke="#40a040" stroke-width="1.5"/><circle cx="8" cy="8" r="5" fill="#2050b0"/><path d="M6 5 L11 8 L6 11Z" fill="#fff"/></svg>
<svg class="a" style="left:273px;top:1000px;" width="16" height="16" viewBox="0 0 16 16"><rect x="1" y="1" width="12" height="12" rx="3" fill="#fde8c8" stroke="#e08020"/><circle cx="9" cy="10" r="5.5" fill="#f8d888" stroke="#c89030" stroke-width="0.7"/><path d="M6.5 9 L9 11.5 L11.5 9" stroke="#a06000" stroke-width="1.2" fill="none"/></svg>
<svg class="a" style="left:296px;top:1000px;" width="16" height="16" viewBox="0 0 16 16"><rect x="0.5" y="0.5" width="15" height="15" fill="#fff" stroke="#20a040"/><text x="8" y="13" font-family="Liberation Sans" font-weight="bold" font-size="13" fill="#108a30" text-anchor="middle">X</text></svg>
<svg class="a" style="left:319px;top:1000px;" width="16" height="16" viewBox="0 0 16 16"><rect x="0.5" y="0.5" width="15" height="15" fill="#fff" stroke="#e04010"/><text x="8" y="13" font-family="Liberation Sans" font-weight="bold" font-size="13" fill="#d04010" text-anchor="middle">P</text></svg>
<svg class="a" style="left:342px;top:1000px;" width="16" height="16" viewBox="0 0 16 16"><rect x="0.5" y="0.5" width="15" height="15" fill="#fff" stroke="#2060c0"/><text x="8" y="13" font-family="Liberation Sans" font-weight="bold" font-size="12" fill="#1050b0" text-anchor="middle">W</text></svg>
<div class="a" style="left:399px;top:998px;width:102px;height:23px;border-radius:3px;background:linear-gradient(#4a8cf0 0px,#3c80f0 3px,#3a7cee 18px,#3472e0 23px);box-shadow:inset -1px -1px 0 #2858c8"></div>
<svg class="a" style="left:408px;top:1002px;" width="16" height="16" viewBox="0 0 16 16"><rect x="1" y="1" width="14" height="14" fill="#f8e0f0" stroke="#a03060"/><circle cx="10" cy="6" r="3" fill="#c04080"/><path d="M8 8 L3 13" stroke="#c04080" stroke-width="2"/></svg>
<div class="a t" style="left:428px;top:1004.19px;font-size:11px;color:#fff"><span style="color:#f8d040;font-weight:bold">7</span> Micros...</div>
<svg class="a" style="left:490px;top:1007px;" width="7" height="4" viewBox="0 0 7 4"><path d="M0 0 L7 0 L3.5 4Z" fill="#fff"/></svg>
<div class="a" style="left:502px;top:998px;width:102px;height:23px;border-radius:3px;background:linear-gradient(#4a8cf0 0px,#3c80f0 3px,#3a7cee 18px,#3472e0 23px);box-shadow:inset -1px -1px 0 #2858c8"></div>
<svg class="a" style="left:511px;top:1002px;" width="16" height="16" viewBox="0 0 16 16"><circle cx="8" cy="8" r="7" fill="#3a6ad0"/><path d="M2 6 Q8 3 14 7 M1.5 9 Q8 6 14.5 10" stroke="#fff" stroke-width="1.5" fill="none"/></svg>
<div class="a t" style="left:531px;top:1004.19px;font-size:11px;color:#fff">Google E...</div>
<div class="a" style="left:605px;top:998px;width:102px;height:23px;border-radius:3px;background:linear-gradient(#4a8cf0 0px,#3c80f0 3px,#3a7cee 18px,#3472e0 23px);box-shadow:inset -1px -1px 0 #2858c8"></div>
<svg class="a" style="left:614px;top:1002px;" width="16" height="16" viewBox="0 0 16 16"><circle cx="8" cy="8" r="7" fill="#2050c0"/><path d="M8 1 Q15 2 15 9 Q14 15 8 15 Q2 15 1.5 10 Q3 13 7 12 Q4 10 5 6 Q8 4 10 6 Q10 3 8 1Z" fill="#f07010"/></svg>
<div class="a t" style="left:634px;top:1004.19px;font-size:11px;color:#fff">HOMBOU...</div>
<div class="a" style="left:708px;top:998px;width:102px;height:23px;border-radius:3px;background:linear-gradient(#4a8cf0 0px,#3c80f0 3px,#3a7cee 18px,#3472e0 23px);box-shadow:inset -1px -1px 0 #2858c8"></div>
<svg class="a" style="left:717px;top:1002px;" width="16" height="16" viewBox="0 0 16 16"><rect x="1" y="1" width="12" height="12" rx="3" fill="#fde8c8" stroke="#e08020"/><circle cx="9" cy="10" r="5.5" fill="#f8d888" stroke="#c89030" stroke-width="0.7"/><path d="M6.5 9 L9 11.5 L11.5 9" stroke="#a06000" stroke-width="1.2" fill="none"/></svg>
<div class="a t" style="left:737px;top:1004.19px;font-size:11px;color:#fff"><span style="color:#f8d040;font-weight:bold">2</span> Micros...</div>
<svg class="a" style="left:799px;top:1007px;" width="7" height="4" viewBox="0 0 7 4"><path d="M0 0 L7 0 L3.5 4Z" fill="#fff"/></svg>
<div class="a" style="left:811px;top:998px;width:102px;height:23px;border-radius:3px;background:#1e52b8;box-shadow:inset 1px 1px 1px #143e90"></div>
<svg class="a" style="left:820px;top:1002px;" width="16" height="16" viewBox="0 0 16 16"><rect width="16" height="16" fill="#a04888"/><rect x="1" y="1" width="14" height="14" fill="#c86aa8"/><path d="M5 16 L7 9 L10 9 L12 16Z" fill="#5a2020"/></svg>
<div class="a t" style="left:840px;top:1004.19px;font-size:11px;color:#fff">WinStars ...</div>
<div class="a" style="left:914px;top:998px;width:102px;height:23px;border-radius:3px;background:linear-gradient(#4a8cf0 0px,#3c80f0 3px,#3a7cee 18px,#3472e0 23px);box-shadow:inset -1px -1px 0 #2858c8"></div>
<svg class="a" style="left:923px;top:1002px;" width="16" height="16" viewBox="0 0 16 16"><path d="M1 3 L6 3 L7 5 L14 5 L14 14 L1 14Z" fill="#f8d860" stroke="#b08820" stroke-width="0.8"/><path d="M1 7 L15 7 L14 14 L1 14Z" fill="#fce890" stroke="#b08820" stroke-width="0.8"/></svg>
<div class="a t" style="left:943px;top:1004.19px;font-size:11px;color:#fff">S:\ARCHI...</div>
<div class="a" style="left:1017px;top:998px;width:102px;height:23px;border-radius:3px;background:linear-gradient(#4a8cf0 0px,#3c80f0 3px,#3a7cee 18px,#3472e0 23px);box-shadow:inset -1px -1px 0 #2858c8"></div>
<svg class="a" style="left:1026px;top:1002px;" width="16" height="16" viewBox="0 0 16 16"><path d="M2 1 L11 1 L14 4 L14 15 L2 15Z" fill="#fff" stroke="#c02020"/><path d="M4 12 Q7 4 8 3 Q9 6 12 11 Q7 10 4 12Z" fill="none" stroke="#d02020" stroke-width="1.2"/></svg>
<div class="a t" style="left:1046px;top:1004.19px;font-size:11px;color:#fff">HOMBOU...</div>
<div class="a" style="left:1133px;top:994px;width:147px;height:30px;background:linear-gradient(#18a8f0 0px,#10a4f0 2px,#0c9aee 10px,#0c98ea 24px,#1090e0 30px);border-left:1px solid #0a3a9a;box-shadow:inset 1px 1px 0 #2ec0ff"></div>
<svg class="a" style="left:1124px;top:1000px;" width="20" height="20" viewBox="0 0 20 20"><defs><radialGradient id="ch" cx="0.35" cy="0.3" r="0.7"><stop offset="0" stop-color="#b0dcff"/><stop offset="0.5" stop-color="#3a90f0"/><stop offset="1" stop-color="#0a50d0"/></radialGradient></defs><circle cx="10" cy="10" r="8.7" fill="url(#ch)" stroke="#1a3080" stroke-width="0.8"/><path d="M12 5.5 L7.5 10 L12 14.5" stroke="#fff" stroke-width="2.2" fill="none"/></svg>
<svg class="a" style="left:1144px;top:1002px;" width="16" height="16" viewBox="0 0 16 16"><rect x="1" y="1" width="12" height="12" rx="3" fill="#fde8c8" stroke="#e08020"/><circle cx="9" cy="10" r="5.5" fill="#f8d888" stroke="#c89030" stroke-width="0.7"/><path d="M6.5 9 L9 11.5 L11.5 9" stroke="#a06000" stroke-width="1.2" fill="none"/></svg>
<svg class="a" style="left:1162px;top:1002px;" width="16" height="16" viewBox="0 0 16 16"><rect x="6" y="1" width="9" height="8" fill="#6070a0" stroke="#303860" stroke-width="0.7"/><rect x="1" y="5" width="9" height="8" fill="#7080b0" stroke="#303860" stroke-width="0.7"/><rect x="2" y="13" width="7" height="2" fill="#c0c8e0"/></svg>
<svg class="a" style="left:1180px;top:1002px;" width="16" height="16" viewBox="0 0 16 16"><circle cx="8" cy="8" r="7" fill="#d8e0f0" stroke="#6080c0"/><path d="M2 8 L8 3 L8 8Z" fill="#30a030"/><path d="M8 8 L14 4 L14 10Z" fill="#e02020"/><path d="M4 12 L12 12 L8 8Z" fill="#3050c0"/></svg>
<svg class="a" style="left:1198px;top:1002px;" width="16" height="16" viewBox="0 0 16 16"><rect x="0.5" y="0.5" width="15" height="15" rx="2" fill="#2a5aa0" stroke="#103070"/><path d="M8 2 L3 14 M8 2 L13 14 M4 6 L12 6 M3.5 9 L12.5 9 M3 12 L13 12" stroke="#fff" stroke-width="1"/></svg>
<svg class="a" style="left:1217px;top:1002px;" width="16" height="16" viewBox="0 0 16 16"><path d="M1 1 L6 3 L14 11 L12 14 L3 6Z" fill="#c8ccd8" stroke="#404860" stroke-width="0.8"/><path d="M11 12 L15 15 L13 11Z" fill="#3a70d0"/></svg>
<div class="a t" style="left:1239px;top:1004.19px;font-size:11px;color:#fff">17:30</div>
<div id="sky" class="a">
<svg class="a" style="left:-31px;top:-79px" width="1280" height="1024" viewBox="0 0 1280 1024">
<defs>
<radialGradient id="s0"><stop offset="0" stop-color="#d8f4ff"/><stop offset="0.22" stop-color="#d8f4ff" stop-opacity="0.92"/><stop offset="0.5" stop-color="#7a8878" stop-opacity="0.85"/><stop offset="0.72" stop-color="#7a8878" stop-opacity="0.45"/><stop offset="0.88" stop-color="#7a8878" stop-opacity="0.15"/><stop offset="1" stop-color="#7a8878" stop-opacity="0"/></radialGradient>
<radialGradient id="s1"><stop offset="0" stop-color="#ffe4d6"/><stop offset="0.22" stop-color="#ffe4d6" stop-opacity="0.92"/><stop offset="0.5" stop-color="#80604a" stop-opacity="0.85"/><stop offset="0.72" stop-color="#80604a" stop-opacity="0.45"/><stop offset="0.88" stop-color="#80604a" stop-opacity="0.15"/><stop offset="1" stop-color="#80604a" stop-opacity="0"/></radialGradient>
<radialGradient id="s2"><stop offset="0" stop-color="#fffaf0"/><stop offset="0.22" stop-color="#fffaf0" stop-opacity="0.92"/><stop offset="0.5" stop-color="#9a8a72" stop-opacity="0.85"/><stop offset="0.72" stop-color="#9a8a72" stop-opacity="0.45"/><stop offset="0.88" stop-color="#9a8a72" stop-opacity="0.15"/><stop offset="1" stop-color="#9a8a72" stop-opacity="0"/></radialGradient>
<radialGradient id="s3"><stop offset="0" stop-color="#fffaf0"/><stop offset="0.22" stop-color="#fffaf0" stop-opacity="0.92"/><stop offset="0.5" stop-color="#9a8a72" stop-opacity="0.85"/><stop offset="0.72" stop-color="#9a8a72" stop-opacity="0.45"/><stop offset="0.88" stop-color="#9a8a72" stop-opacity="0.15"/><stop offset="1" stop-color="#9a8a72" stop-opacity="0"/></radialGradient>
<radialGradient id="s4"><stop offset="0" stop-color="#fff8ec"/><stop offset="0.22" stop-color="#fff8ec" stop-opacity="0.92"/><stop offset="0.5" stop-color="#9a7e62" stop-opacity="0.85"/><stop offset="0.72" stop-color="#9a7e62" stop-opacity="0.45"/><stop offset="0.88" stop-color="#9a7e62" stop-opacity="0.15"/><stop offset="1" stop-color="#9a7e62" stop-opacity="0"/></radialGradient>
<radialGradient id="s5"><stop offset="0" stop-color="#fff8ec"/><stop offset="0.22" stop-color="#fff8ec" stop-opacity="0.92"/><stop offset="0.5" stop-color="#9a7e62" stop-opacity="0.85"/><stop offset="0.72" stop-color="#9a7e62" stop-opacity="0.45"/><stop offset="0.88" stop-color="#9a7e62" stop-opacity="0.15"/><stop offset="1" stop-color="#9a7e62" stop-opacity="0"/></radialGradient>
<radialGradient id="s6"><stop offset="0" stop-color="#fff6ec"/><stop offset="0.22" stop-color="#fff6ec" stop-opacity="0.92"/><stop offset="0.5" stop-color="#9a7e62" stop-opacity="0.85"/><stop offset="0.72" stop-color="#9a7e62" stop-opacity="0.45"/><stop offset="0.88" stop-color="#9a7e62" stop-opacity="0.15"/><stop offset="1" stop-color="#9a7e62" stop-opacity="0"/></radialGradient>
<radialGradient id="s7"><stop offset="0" stop-color="#fffcf4"/><stop offset="0.22" stop-color="#fffcf4" stop-opacity="0.92"/><stop offset="0.5" stop-color="#9a8a72" stop-opacity="0.85"/><stop offset="0.72" stop-color="#9a8a72" stop-opacity="0.45"/><stop offset="0.88" stop-color="#9a8a72" stop-opacity="0.15"/><stop offset="1" stop-color="#9a8a72" stop-opacity="0"/></radialGradient>
<radialGradient id="s8"><stop offset="0" stop-color="#ffe6da"/><stop offset="0.22" stop-color="#ffe6da" stop-opacity="0.92"/><stop offset="0.5" stop-color="#7a5e4a" stop-opacity="0.85"/><stop offset="0.72" stop-color="#7a5e4a" stop-opacity="0.45"/><stop offset="0.88" stop-color="#7a5e4a" stop-opacity="0.15"/><stop offset="1" stop-color="#7a5e4a" stop-opacity="0"/></radialGradient>
<radialGradient id="s9"><stop offset="0" stop-color="#ffffff"/><stop offset="0.22" stop-color="#ffffff" stop-opacity="0.92"/><stop offset="0.5" stop-color="#7e7868" stop-opacity="0.85"/><stop offset="0.72" stop-color="#7e7868" stop-opacity="0.45"/><stop offset="0.88" stop-color="#7e7868" stop-opacity="0.15"/><stop offset="1" stop-color="#7e7868" stop-opacity="0"/></radialGradient>
<radialGradient id="s10"><stop offset="0" stop-color="#fff8ec"/><stop offset="0.22" stop-color="#fff8ec" stop-opacity="0.92"/><stop offset="0.5" stop-color="#9a7e62" stop-opacity="0.85"/><stop offset="0.72" stop-color="#9a7e62" stop-opacity="0.45"/><stop offset="0.88" stop-color="#9a7e62" stop-opacity="0.15"/><stop offset="1" stop-color="#9a7e62" stop-opacity="0"/></radialGradient>
<radialGradient id="s11"><stop offset="0" stop-color="#ffffff"/><stop offset="0.22" stop-color="#ffffff" stop-opacity="0.92"/><stop offset="0.5" stop-color="#9a8c72" stop-opacity="0.85"/><stop offset="0.72" stop-color="#9a8c72" stop-opacity="0.45"/><stop offset="0.88" stop-color="#9a8c72" stop-opacity="0.15"/><stop offset="1" stop-color="#9a8c72" stop-opacity="0"/></radialGradient>
<radialGradient id="s12"><stop offset="0" stop-color="#ffffe8"/><stop offset="0.22" stop-color="#ffffe8" stop-opacity="0.92"/><stop offset="0.5" stop-color="#8a8462" stop-opacity="0.85"/><stop offset="0.72" stop-color="#8a8462" stop-opacity="0.45"/><stop offset="0.88" stop-color="#8a8462" stop-opacity="0.15"/><stop offset="1" stop-color="#8a8462" stop-opacity="0"/></radialGradient>
</defs>
<g shape-rendering="crispEdges">
<rect x="639" y="79" width="1" height="862" fill="#5c5c5c"/>
<rect x="636" y="95" width="9" height="1" fill="#b4b4b4"/>
<rect x="636" y="155" width="9" height="1" fill="#b4b4b4"/>
<rect x="636" y="214" width="9" height="1" fill="#b4b4b4"/>
<rect x="636" y="274" width="9" height="1" fill="#b4b4b4"/>
<rect x="630" y="333" width="21" height="1" fill="#b4b4b4"/>
<rect x="636" y="392" width="9" height="1" fill="#b4b4b4"/>
<rect x="636" y="451" width="9" height="1" fill="#b4b4b4"/>
<rect x="636" y="510" width="9" height="1" fill="#b4b4b4"/>
<rect x="636" y="569" width="9" height="1" fill="#b4b4b4"/>
<rect x="633" y="628" width="15" height="1" fill="#b4b4b4"/>
<rect x="636" y="687" width="9" height="1" fill="#b4b4b4"/>
<rect x="636" y="746" width="9" height="1" fill="#b4b4b4"/>
<rect x="636" y="806" width="9" height="1" fill="#b4b4b4"/>
<rect x="636" y="865" width="9" height="1" fill="#b4b4b4"/>
<rect x="31" y="925" width="1218" height="1" fill="#ff0000"/>
<rect x="630" y="925" width="21" height="1" fill="#a8a8a8"/>
<rect x="101" y="935" width="1" height="6" fill="#a0a0a0"/>
<rect x="161" y="935" width="1" height="6" fill="#a0a0a0"/>
<rect x="221" y="935" width="1" height="6" fill="#a0a0a0"/>
<rect x="281" y="935" width="1" height="6" fill="#a0a0a0"/>
<rect x="401" y="935" width="1" height="6" fill="#a0a0a0"/>
<rect x="461" y="935" width="1" height="6" fill="#a0a0a0"/>
<rect x="521" y="935" width="1" height="6" fill="#a0a0a0"/>
<rect x="581" y="935" width="1" height="6" fill="#a0a0a0"/>
<rect x="699" y="935" width="1" height="6" fill="#a0a0a0"/>
<rect x="758" y="935" width="1" height="6" fill="#a0a0a0"/>
<rect x="818" y="935" width="1" height="6" fill="#a0a0a0"/>
<rect x="877" y="935" width="1" height="6" fill="#a0a0a0"/>
<rect x="997" y="935" width="1" height="6" fill="#a0a0a0"/>
<rect x="1057" y="935" width="1" height="6" fill="#a0a0a0"/>
<rect x="1118" y="935" width="1" height="6" fill="#a0a0a0"/>
<rect x="1178" y="935" width="1" height="6" fill="#a0a0a0"/>
<rect x="341" y="928" width="1" height="13" fill="#a0a0a0"/>
<rect x="937" y="928" width="1" height="13" fill="#a0a0a0"/>
<rect x="39" y="916" width="1" height="25" fill="#a0a0a0"/>
<rect x="1239" y="916" width="1" height="25" fill="#a0a0a0"/>
</g>
<line x1="829" y1="79" x2="858" y2="126" stroke="#7070e8" stroke-width="1"/>
<line x1="1135.5" y1="579" x2="1166.6" y2="628.5" stroke="#7070e8" stroke-width="1"/>
<line x1="1197" y1="679" x2="1228.6" y2="728.4" stroke="#7070e8" stroke-width="1"/>
<circle cx="878" cy="634" r="18" fill="#090806" stroke="#16150f" stroke-width="1"/>
<circle cx="563.4" cy="134" r="7.5" fill="url(#s0)"/>
<circle cx="591" cy="146.5" r="8" fill="url(#s1)"/>
<circle cx="82" cy="192" r="7" fill="url(#s2)"/>
<circle cx="129" cy="200" r="5.5" fill="url(#s3)"/>
<circle cx="79.5" cy="623.4" r="7.8" fill="url(#s4)"/>
<circle cx="134" cy="620.7" r="9" fill="url(#s5)"/>
<circle cx="253" cy="774.4" r="9.8" fill="url(#s6)"/>
<circle cx="203.2" cy="829.6" r="6.3" fill="url(#s7)"/>
<circle cx="743.8" cy="581.7" r="9.4" fill="url(#s8)"/>
<circle cx="1067.8" cy="608.7" r="6.6" fill="url(#s9)"/>
<circle cx="626.7" cy="866.1" r="6.8" fill="url(#s10)"/>
<circle cx="607.8" cy="643" r="12" fill="url(#s11)"/>
<circle cx="194" cy="937.5" r="7" fill="url(#s12)"/>
</svg>
<div class="a t" style="left:11px;top:11.84px;font-size:12px;font-weight:bold;color:#fff">19:14:59&nbsp; 27/01/1982 &nbsp;&nbsp; Zoom: 3.1x (20.5°x15.0°)</div>
<div class="a t" style="left:630px;top:250.15px;font-size:14px;color:#c8c8c8;transform:scaleX(0.85);transform-origin:0 0;letter-spacing:0.8px">10 °</div>
<div class="a t" style="left:576px;top:565.84px;font-size:12px;font-style:italic;color:#f06060">Skat</div>
<div class="a t" style="left:846.5px;top:556.19px;font-size:17.5px;font-family:'Liberation Serif',serif;font-weight:bold;font-style:italic;color:#6a6af2;letter-spacing:0.3px">Lune</div>
<div class="a t" style="left:588px;top:827.15px;font-size:14px;color:#8a8a8a;transform:scaleX(0.85);transform-origin:0 0;letter-spacing:0.8px">240°</div>
<div class="a t" style="left:616px;top:847.15px;font-size:14px;color:#8a8a8a;transform:scaleX(0.85);transform-origin:0 0;letter-spacing:0.8px">0°</div>
<div class="a t" style="left:630px;top:842.15px;font-size:14px;color:#c8c8c8;transform:scaleX(0.85);transform-origin:0 0;letter-spacing:0.8px">0 °</div>
<div class="a t" style="left:599px;top:862.15px;font-size:14px;color:#c8c8c8;transform:scaleX(0.85);transform-origin:0 0;letter-spacing:0.8px">240 °</div>
<div class="a t" style="left:-0.5px;top:862.15px;font-size:14px;color:#c8c8c8;transform:scaleX(0.85);transform-origin:0 0;letter-spacing:0.8px">230 °</div>
<div class="a t" style="left:1200px;top:862.15px;font-size:14px;color:#c8c8c8;transform:scaleX(0.85);transform-origin:0 0;letter-spacing:0.8px">250</div>
<div class="a t" style="left:10px;top:852.84px;font-size:12px;font-weight:bold;color:#fff">Mode planétarium</div>
</div>
<div class="a" style="left:871px;top:86px;width:366px;height:472px;background:#0046e0;border-radius:7px 7px 0 0;overflow:hidden">
 <div class="a" style="left:0;top:0;width:366px;height:29px;background:linear-gradient(#0a5cf0 0px,#3c92ff 1px,#2a86ff 2px,#0a6af5 3px,#0058e8 4px,#0054dc 7px,#0056e0 11px,#005ef0 17px,#0064fa 20px,#0066ff 26px,#0050e0 28px,#0040c8 29px)"></div>
 <div class="a" style="left:0;top:29px;width:3px;height:443px;background:linear-gradient(90deg,#0040d0,#166cff 50%,#0058f0)"></div>
 <div class="a" style="left:363px;top:29px;width:3px;height:443px;background:linear-gradient(90deg,#0048e8,#0024c0 50%,#000c98)"></div>
 <div class="a" style="left:0;top:469px;width:366px;height:3px;background:linear-gradient(#0040e0,#0020b8 60%,#000c90)"></div>
 <div class="a t" style="left:8px;top:10px;font-size:13px;font-weight:bold;color:#fff;text-shadow:1px 1px 0 #0a1e80">Informations sur l'objet :</div>
 <div class="a" style="left:340px;top:5px;width:21px;height:21px;border:1px solid #fff;border-radius:3px;background:radial-gradient(circle at 30% 25%,#f0a080 0%,#e8603a 40%,#d8451e 75%,#c03010 100%)"><svg class="a" style="left:4px;top:4px" width="11" height="11" viewBox="0 0 11 11"><path d="M1.5 1.5 L9.5 9.5 M9.5 1.5 L1.5 9.5" stroke="#fff" stroke-width="2" stroke-linecap="square"/></svg></div>
 <div class="a" style="left:3px;top:29px;width:360px;height:440px;background:#ece9d8;border-top:1px solid #fbf6e2"></div>
 <div class="a" style="left:23px;top:34px;width:320px;height:60px;overflow:hidden;background:#807c68"><svg class="a" style="left:0;top:0" width="320" height="60" viewBox="0 0 320 60">
<defs>
<filter id="mt" x="0" y="0" width="100%" height="100%">
<feTurbulence type="fractalNoise" baseFrequency="0.12 0.16" numOctaves="4" seed="11" result="n"/>
<feColorMatrix in="n" type="matrix" values="1.3 0 0 0 -0.17  1.3 0 0 0 -0.18  1.3 0 0 0 -0.22  0 0 0 0 1"/>
</filter>
<filter id="bl"><feGaussianBlur stdDeviation="2.5"/></filter>
<filter id="bl1"><feGaussianBlur stdDeviation="1.2"/></filter>
<linearGradient id="mg" x1="0" y1="0" x2="1" y2="0">
<stop offset="0" stop-color="#807c6c"/><stop offset="0.1" stop-color="#54523f"/><stop offset="0.25" stop-color="#64604c"/><stop offset="0.45" stop-color="#6e6a56"/><stop offset="0.65" stop-color="#686452"/><stop offset="0.8" stop-color="#7e7a68"/><stop offset="0.88" stop-color="#54523f"/><stop offset="1" stop-color="#4a4836"/>
</linearGradient>
</defs>
<rect width="320" height="60" fill="url(#mg)"/>
<rect width="320" height="60" filter="url(#mt)" opacity="0.35"/>
<rect width="320" height="60" fill="#7a7040" opacity="0.18"/>
<g filter="url(#bl)">
<path d="M0 0 L22 0 L26 30 L18 60 L0 60Z" fill="#a8a494" opacity="0.45"/>
<path d="M28 0 Q36 18 30 38 Q38 52 34 60 L46 60 Q44 45 40 35 Q45 18 38 0Z" fill="#2e2e26" opacity="0.75"/>
<path d="M48 5 Q58 20 52 45 L60 60 L70 60 Q62 40 64 20 L56 0Z" fill="#4a4a3a" opacity="0.5"/>
<path d="M110 0 Q118 25 108 60 L120 60 Q126 30 120 0Z" fill="#4a4838" opacity="0.35"/>
<path d="M270 0 Q282 25 276 45 L282 60 L300 60 Q294 35 298 12 L292 0Z" fill="#4a4836" opacity="0.5"/>
<path d="M300 0 L320 0 L320 60 L300 60Z" fill="#4e4c3a" opacity="0.5"/>
</g>
<g filter="url(#bl1)">
<path d="M140 40 Q150 34 158 42 Q166 52 164 60 L136 60Z" fill="#a8a8c0" opacity="0.6"/>
<path d="M160 15 Q170 20 174 35 Q182 50 178 60 L164 60 Q166 45 160 32 Q156 22 160 15Z" fill="#1e1e1a" opacity="0.85"/>
<path d="M246 0 Q258 18 252 36 Q250 48 256 60 L264 60 Q260 45 264 32 Q268 16 260 0Z" fill="#d0ccbc" opacity="0.6"/>
<circle cx="56" cy="28" r="2.5" fill="#e8e8e8" opacity="0.8"/>
<circle cx="100" cy="14" r="2.5" fill="#303028" opacity="0.5"/>
<circle cx="86" cy="38" r="2" fill="#303028" opacity="0.5"/>
<circle cx="128" cy="44" r="2" fill="#303028" opacity="0.4"/>
<circle cx="205" cy="20" r="2" fill="#3a3a30" opacity="0.4"/>
<circle cx="150" cy="52" r="1.5" fill="#ffffff" opacity="0.8"/>
</g>
</svg>
</div>
<div class="a t" style="left:130px;top:39.49px;font-size:39px;font-weight:bold;font-style:italic;color:#fff">Lune</div>
 <div class="a" style="left:14px;top:101px;width:339px;height:322px;border-top:2px solid #aca899;border-left:2px solid #aca899;border-right:1px solid #fff;border-bottom:1px solid #fff;background:#fff"><div class="a" style="left:0;top:0;width:336px;height:319px;border-top:1px solid #716f64;border-left:1px solid #716f64;border-right:1px solid #f1efe2;border-bottom:1px solid #f1efe2"></div></div>
 <div class="a" style="left:18px;top:105px;width:2px;height:19px;background:#000"></div>
<div class="a t" style="left:19px;top:106.16px;font-size:16px;color:#000">Lune</div>
 <div class="a" style="left:18px;top:135px;width:294px;height:1px;background:#000"></div>
<div class="a t" style="left:21.5px;top:153.03px;font-size:10px;font-size:10px;letter-spacing:0.45px;color:#000">Situation de la Lune</div>
<div class="a t" style="left:21.5px;top:166.03px;font-size:10px;font-size:10px;letter-spacing:0.45px;color:#000">le 27 janvier 1982  à  19:15:00</div>
<div class="a t" style="left:20.600000000000023px;top:178.84px;font-size:10px;font-size:10px;letter-spacing:0.45px;color:#000">(Jour Julien = 2444997.2604)</div>
<div class="a t" style="left:21.5px;top:205.04px;font-size:10px;font-size:10px;letter-spacing:0.45px;color:#000">Lieu d'observation:</div>
<div class="a t" style="left:21px;top:217.74px;font-size:10px;font-size:10px;letter-spacing:0.45px;color:#000">48 °  42 '  0.0 " Nord</div>
<div class="a t" style="left:143px;top:217.74px;font-size:10px;font-size:10px;letter-spacing:0.45px;color:#000">6 °  12 '  0.0 " Est</div>
 <div class="a" style="left:18px;top:239px;width:294px;height:1px;background:#000"></div>
<div class="a t" style="left:18.200000000000045px;top:268.55px;font-size:15.3px;color:#000"><u style="text-underline-offset:2px">Informations locales :</u></div>
<div class="a t" style="left:27.200000000000045px;top:306.97px;font-size:12.2px;font-size:12.2px;color:#000">Ascension droite  =  22 h  39 m  20.5 s</div>
<div class="a t" style="left:27.200000000000045px;top:321.97px;font-size:12.2px;font-size:12.2px;color:#000">Déclinaison  =  - 12 °  55 ' 23.8 "</div>
<div class="a t" style="left:27.200000000000045px;top:336.97px;font-size:12.2px;font-size:12.2px;color:#000">(Coordonnées apparentes)</div>
<div class="a t" style="left:27.200000000000045px;top:366.97px;font-size:12.2px;font-size:12.2px;color:#000">Azimut  =  244 °   3 ' 8.2 "</div>
<div class="a t" style="left:27.200000000000045px;top:381.97px;font-size:12.2px;font-size:12.2px;color:#000">Hauteur  =    4 °  53 ' 36.5 "</div>
 <div class="a" style="left:17px;top:409px;width:200px;height:11px;overflow:hidden"><div class="a t" style="left:10px;top:2.97px;font-size:12.2px;color:#000">Lever = 09:38</div></div>
 <div class="a" style="left:333px;top:104px;width:17px;height:317px;background:linear-gradient(90deg,#f3f1ea,#fdfdfa 40%,#f0eee4)"></div>
 <div class="a" style="left:335px;top:105px;width:13px;height:14px;border:1px solid #b4c8f6;border-radius:2px;background:linear-gradient(135deg,#dfe8fd,#c2d3fb 60%,#b0c6f8)"><svg class="a" style="left:0;top:1px" width="14" height="13"><path d="M2.5 8.5 L6.5 4.5 L10.5 8.5" stroke="#4d6185" stroke-width="2.4" fill="none"/></svg></div>
 <div class="a" style="left:335px;top:404px;width:13px;height:14px;border:1px solid #b4c8f6;border-radius:2px;background:linear-gradient(135deg,#dfe8fd,#c2d3fb 60%,#b0c6f8)"><svg class="a" style="left:0;top:1px" width="14" height="13"><path d="M2.5 5 L6.5 9 L10.5 5" stroke="#4d6185" stroke-width="2.4" fill="none"/></svg></div>
 <div class="a" style="left:335px;top:122px;width:14px;height:101px;border:1px solid #b4c8f6;border-radius:2px;background:linear-gradient(90deg,#c9d8fc,#c4d5fb 50%,#b8cdf9)"><div class="a" style="left:3px;top:47px;width:7px;height:7px;background:repeating-linear-gradient(#eef3fe 0 1px,#8faaea 1px 2px)"></div></div>
 <div class="a" style="left:16px;top:436px;width:54px;height:21px;border:1px solid #003c74;border-radius:3px;background:linear-gradient(#fff,#f5f5f1 40%,#ecebe5 85%,#d6d0c5)"><div class="a t" style="left:-20px;width:92px;top:4px;text-align:center;font-size:12px;transform:scaleX(0.84);color:#000">Suivre</div></div>
 <div class="a" style="left:87px;top:436px;width:54px;height:21px;border:1px solid #003c74;border-radius:3px;background:linear-gradient(#fff,#f5f5f1 40%,#ecebe5 85%,#d6d0c5)"><div class="a t" style="left:-20px;width:92px;top:4px;text-align:center;font-size:12px;transform:scaleX(0.84);color:#000">Centrer</div></div>
 <div class="a" style="left:157px;top:436px;width:54px;height:21px;border:1px solid #003c74;border-radius:3px;background:linear-gradient(#fff,#f5f5f1 40%,#ecebe5 85%,#d6d0c5)"><div class="a t" style="left:-20px;width:92px;top:4px;text-align:center;font-size:12px;transform:scaleX(0.84);color:#000">Imprimer</div></div>
 <div class="a" style="left:228px;top:436px;width:54px;height:21px;border:1px solid #003c74;border-radius:3px;background:linear-gradient(#fff,#f5f5f1 40%,#ecebe5 85%,#d6d0c5)"><div class="a" style="left:0;top:0;right:0;bottom:0;border:2px solid;border-color:#cee7ff #a9c4f5 #7b9ce8 #a9c4f5;border-radius:2px"></div><div class="a t" style="left:-20px;width:92px;top:4px;text-align:center;font-size:12px;transform:scaleX(0.84);color:#000">Fermer</div></div>
 <div class="a" style="left:298px;top:436px;width:54px;height:21px;border:1px solid #003c74;border-radius:3px;background:linear-gradient(#fff,#f5f5f1 40%,#ecebe5 85%,#d6d0c5)"><div class="a t" style="left:-20px;width:92px;top:4px;text-align:center;font-size:12px;transform:scaleX(0.84);color:#000">Aide</div></div>
</div>
</body></html>
